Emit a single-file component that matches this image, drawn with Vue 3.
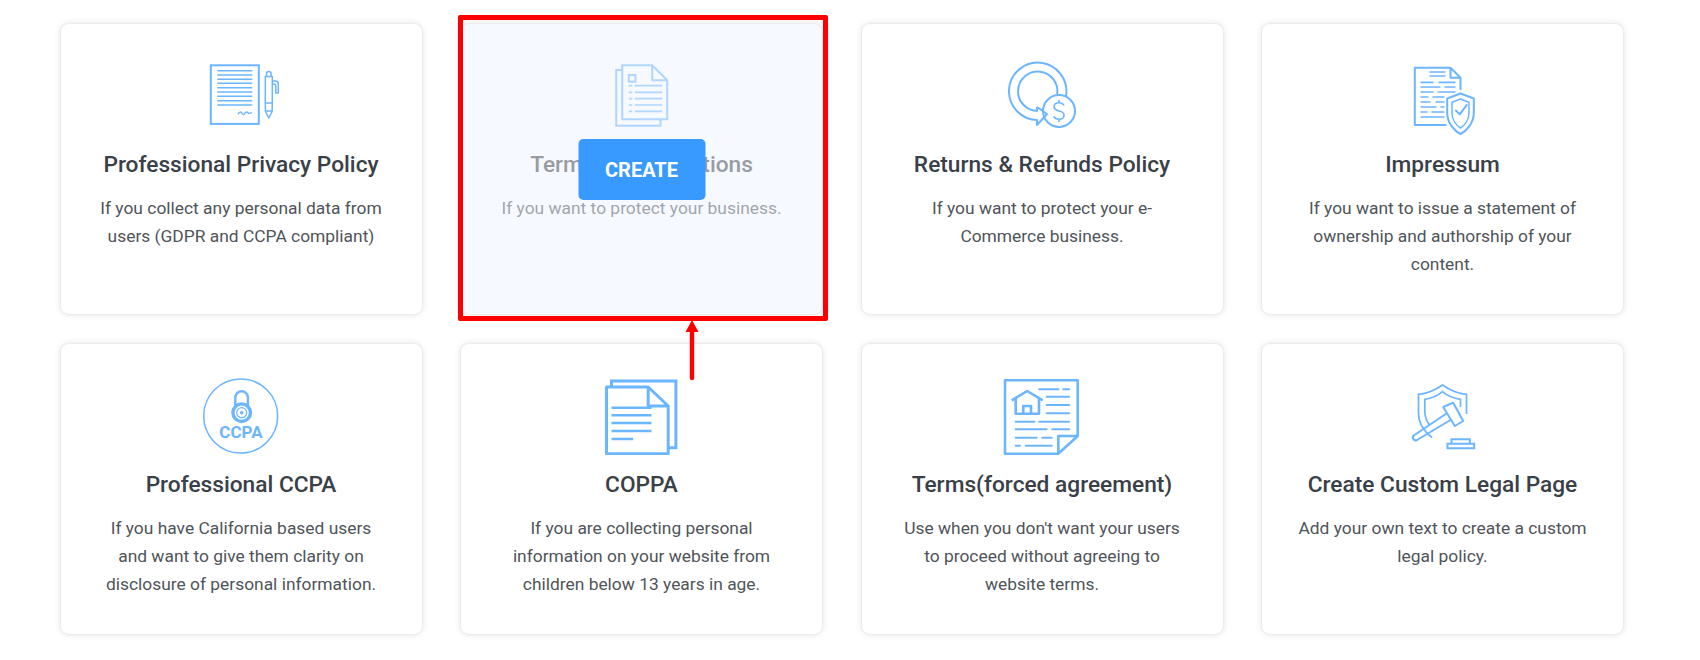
<script setup>
const cards = [
  { icon: 'privacy', title: 'Professional Privacy Policy', text: 'If you collect any personal data from users (GDPR and CCPA compliant)' },
  { icon: 'terms', title: 'Terms and Conditions', text: 'If you want to protect your business.', hovered: true },
  { icon: 'returns', title: 'Returns & Refunds Policy', text: 'If you want to protect your e-Commerce business.' },
  { icon: 'impressum', title: 'Impressum', text: 'If you want to issue a statement of ownership and authorship of your content.' },
  { icon: 'ccpa', title: 'Professional CCPA', text: 'If you have California based users and want to give them clarity on disclosure of personal information.' },
  { icon: 'coppa', title: 'COPPA', text: 'If you are collecting personal information on your website from children below 13 years in age.' },
  { icon: 'forced', title: 'Terms(forced agreement)', text: "Use when you don't want your users to proceed without agreeing to website terms." },
  { icon: 'custom', title: 'Create Custom Legal Page', text: 'Add your own text to create a custom legal policy.' },
]
</script>

<template>
  <div class="page">
    <div class="grid">
      <div v-for="card in cards" :key="card.icon" class="card" :class="{ hovered: card.hovered }">
        <div class="content">
          <svg class="icon" viewBox="0 0 100 80" fill="none" stroke="#6cb5ff" stroke-width="2">
            <g v-if="card.icon === 'privacy'">
              <rect x="19.800" y="10.300" width="48" height="58.600" />
              <path d="M26.300 15.700h35M26.300 20h35M26.300 24.300h35M26.300 28.300h35M26.300 32.700h35M26.300 37h35M26.300 41.300h35M26.300 45.700h35M26.300 50h35" stroke-width="1.500" />
              <path d="M47 59c2-2.500 3-2.500 4-.8s2 1.600 3 0 2-1.600 3-.4 2 .8 4-.3" stroke-width="1.400" />
              <path d="M74.300 21.500h7v27l-.2 8-3.300 6.500-3.300-6.500-.2-8zM74.300 48h7M74.300 56h7M75.500 21.500v-2.800a2.300 2.300 0 0 1 4.600 0v2.800M81.300 26h3c2 0 3 1.200 3 3v9h-2.500v-7c0-1.500-1-2.200-3.500-2.200" stroke-width="1.500" stroke-linejoin="round" />
            </g>
            <g v-else-if="card.icon === 'terms'">
              <path d="M30.200 15h-6v55.700h44.300v-6.400" />
              <path d="M30.200 10.300h30l15 15v39H30.200zM60.200 10.300v15h15" stroke-linejoin="round" />
              <rect x="36.800" y="20" width="6.700" height="6.700" />
              <path d="M36.800 30.700h3.400M36.800 37.300h3.400M36.800 43.700h3.400M36.800 50h3.400M36.800 56.300h3.400M42.800 30.700h27.400M42.800 37.300h27.400M42.800 43.700h27.400M42.800 50h27.400M42.800 56.300h27.400" stroke-width="1.700" />
            </g>
            <g v-else-if="card.icon === 'returns'" transform="translate(1 0)">
              <path d="M73 41.100A28.700 28.700 0 1 0 44.700 65" />
              <path d="M64.200 39.500A19.700 19.700 0 1 0 44.700 56" />
              <path d="M44 52 54 59 44 70V65M44 52v4" stroke-linejoin="round" />
              <circle cx="66" cy="56" r="16" />
              <path d="M71 50.500c-1-2-3-2.700-5-2.700-3 0-5 1.600-5 4s2 3.500 5 4.200 5 1.800 5 4.200-2 4-5 4c-2.200 0-4.200-.8-5.300-2.800M66 45v3M66 64v3" stroke-width="1.600" />
            </g>
            <g v-else-if="card.icon === 'impressum'" transform="translate(1.500 0)">
              <path d="M52 70H20.300V12.700H56l10 10V35M56 12.700v10h10" stroke-linejoin="round" />
              <path d="M35 17h16M35 21h16M26 27.300h13M44 27.300h17M26 32h20M50 32h11M26 37h13M43 37h18M26 42h8M38 42h12M26 47h10M41 47h9M26 52h16M46 52h4M26 57h7M37 57h13M26 62h24" stroke-width="1.700" />
              <path d="M66 38.500 79.300 43.500V58C79.300 68 72 76 66 79 60 76 52.700 68 52.700 58V43.500Z" stroke-linejoin="round" />
              <path d="M66 44 74.500 47.200V58C74.500 65 70 70.500 66 73 62 70.500 57.500 65 57.500 58V47.200Z" stroke-linejoin="round" stroke-width="1.500" />
              <path d="M60.800 55 65.300 59.300 72.700 49.300" stroke-width="2" />
            </g>
            <g v-else-if="card.icon === 'ccpa'">
              <circle cx="49.700" cy="41" r="37" stroke-width="1.500" />
              <path d="M44.300 30v-7.500a6.300 6.300 0 0 1 12.600 0V30" stroke-width="2.400" />
              <circle cx="50.700" cy="37.700" r="8.800" stroke-width="3.400" />
              <circle cx="50.700" cy="37.700" r="5" stroke-width="1.200" />
              <circle cx="50.700" cy="37.700" r="1.800" fill="#6cb5ff" stroke="none" />
              <text x="50" y="63" class="icon-text">CCPA</text>
            </g>
            <g v-else-if="card.icon === 'coppa'" stroke-width="3">
              <path d="M19.500 12V6h64.400v66.700h-7.700" />
              <path d="M14.500 12H56.200L76.200 31V78.700H14.500ZM56.200 12V31H76.200" stroke-linejoin="round" />
              <path d="M19.500 32.700h40M19.500 40.300h40M19.500 48h40M19.500 56h40M19.500 64h21.700" stroke-width="2.400" />
            </g>
            <g v-else-if="card.icon === 'forced'" stroke-width="2.600" transform="translate(1 0)">
              <path d="M12 5.300H84.700V61L65.300 78.700H12ZM84.700 61H65.300V78.700" stroke-linejoin="round" />
              <path d="M18.700 25.300 34.300 16 49.700 25.300M22.700 23.500V38.700H46V23.500M30.300 38.700V31H38V38.700" stroke-linejoin="round" />
              <path d="M46.300 14.300h19M70.300 14.300H76M53.700 21.700H76M53.700 30H76M53.700 38.300H76M22.700 46.700h18.600M46.300 46.700H76M22.700 54.300h31M59.300 54.300H76M22.700 62.700h21M49.300 62.700h9.400M22.700 70.700H27M32.700 70.700h26" stroke-width="2.100" stroke-linecap="round" />
            </g>
            <g v-else-if="card.icon === 'custom'" stroke-width="1.700" transform="translate(1.500 0)">
              <path d="M37.500 62.500C29 56 24 48 24 38V19.300C33 18.500 41 15 48 10 55 15 63 18.500 72 19.300V39" />
              <path d="M35 50C32 46 30.300 42 30.300 37V24.300C37 23.500 43 21 48 16.700 53 21 59 23.500 66 24.300V32" />
              <path d="M48.700 32 58.700 27.700 68.700 46 60.300 51ZM52 38.500 20 60A2.600 2.600 0 0 0 22.500 65L56 45" stroke-linejoin="round" stroke-width="2" />
              <path d="M53 68.700H79.700V73.300H53ZM57 68.700V64.300H75.300V68.700" stroke-width="2" />
            </g>
          </svg>
          <h3 class="title">{{ card.title }}</h3>
          <p class="text">{{ card.text }}</p>
        </div>
        <button v-if="card.hovered" class="create">CREATE</button>
      </div>
    </div>
    <div class="highlight"></div>
    <svg class="arrow" viewBox="0 0 14 62">
      <path d="M7 0 13.500 12H9.200V58a2.200 2.200 0 0 1-4.400 0V12H.5Z" fill="#ff0000" />
    </svg>
  </div>
</template>

<style scoped>
.page {
  position: relative;
  width: 1700px;
  height: 660px;
  box-sizing: border-box;
  padding: 23px 0 0 59.500px;
  background: #fff;
  overflow: hidden;
  font-family: Roboto, sans-serif;
}

.grid {
  display: grid;
  grid-template-columns: repeat(4, 363px);
  grid-auto-rows: 292px;
  column-gap: 37.500px;
  row-gap: 28px;
}

.card {
  position: relative;
  box-sizing: border-box;
  border: 1px solid #ebebeb;
  border-radius: 9px;
  background: #fff;
  box-shadow: 0 0 6px rgba(0, 0, 0, 0.1);
}

.card.hovered {
  background: #f6f9ff;
}

.content {
  display: flex;
  flex-direction: column;
  align-items: center;
  padding: 31px 35px 0;
  text-align: center;
}

.hovered .content {
  opacity: 0.5;
}

.icon {
  width: 100px;
  height: 80px;
}

.icon-text {
  fill: #6cb5ff;
  stroke: none;
  font-family: Roboto, sans-serif;
  font-size: 17px;
  font-weight: 700;
  text-anchor: middle;
}

.title {
  margin: 14.500px 0 0;
  font-size: 22.700px;
  line-height: 30px;
  font-weight: 500;
  color: #3a4048;
}

.text {
  margin: 14px 0 0;
  font-size: 17.400px;
  line-height: 28px;
  font-weight: 400;
  color: #4f545a;
}

.create {
  position: absolute;
  top: 115px;
  left: 50%;
  transform: translateX(-50%);
  width: 127px;
  height: 61px;
  border: 0;
  border-radius: 5px;
  background: #3899ff;
  color: #fff;
  font-family: Roboto, sans-serif;
  font-size: 20px;
  font-weight: 700;
}

.highlight {
  position: absolute;
  left: 458px;
  top: 15px;
  width: 370px;
  height: 306px;
  box-sizing: border-box;
  border: 5px solid #ff0000;
  border-radius: 2px;
}

.arrow {
  position: absolute;
  left: 685px;
  top: 320px;
  width: 14px;
  height: 62px;
}
</style>

<style>
body {
  background: #fff;
}
</style>
